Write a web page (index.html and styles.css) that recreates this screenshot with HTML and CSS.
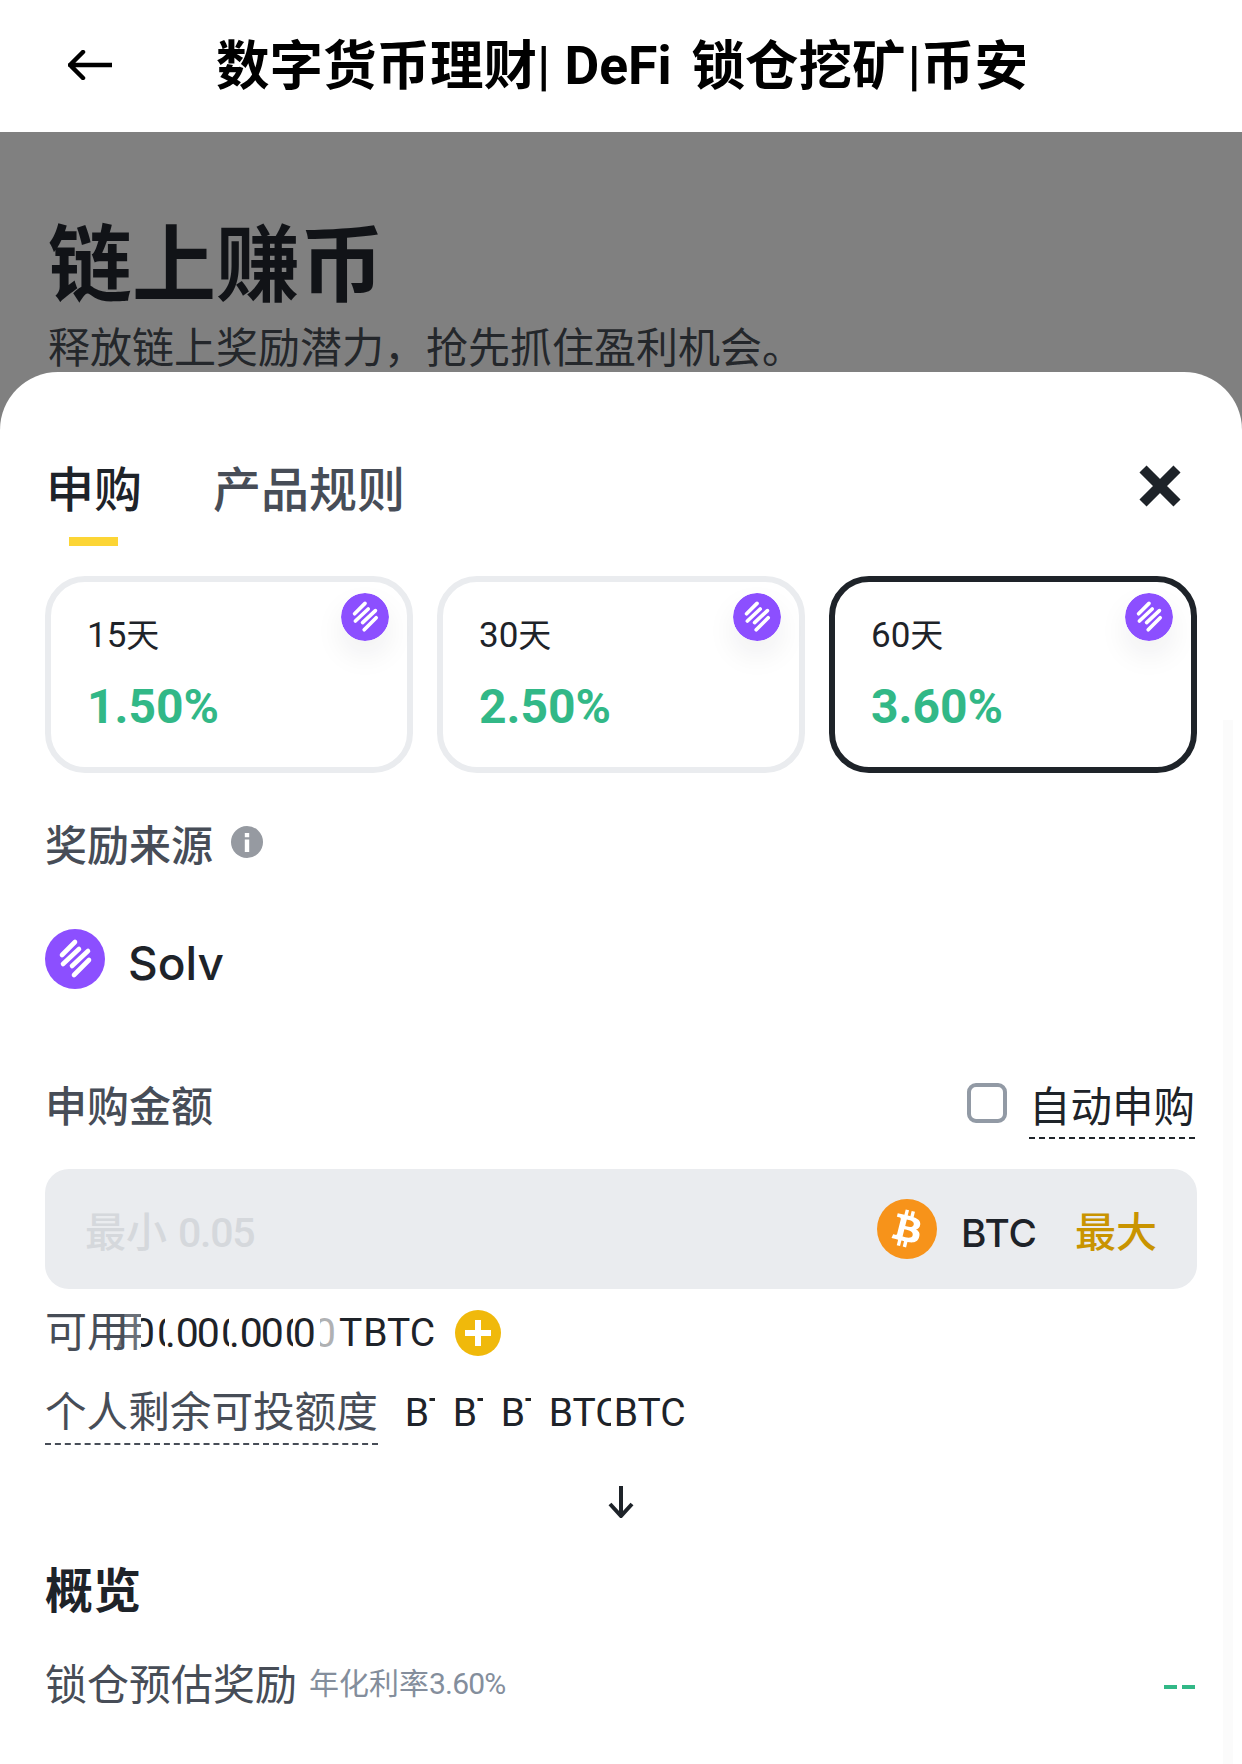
FILE: index.html
```html
<!DOCTYPE html>
<html lang="zh-CN">
<head>
<meta charset="utf-8">
<title>数字货币理财</title>
<link rel="stylesheet" href="styles.css">
</head>
<body>
<div class="page">
  <header class="topbar">
    <svg class="back" viewBox="0 0 44 30" width="44" height="30"><path d="M44 15H2M15 2 2 15l13 13" fill="none" stroke="#000" stroke-width="4.5" stroke-linecap="round" stroke-linejoin="round"/></svg>
    <div class="page-title">数字货币理财<span class="pipe">|</span><span class="latin">DeFi</span>锁仓挖矿<span class="pipe pipe-tight">|</span>币安</div>
  </header>
  <section class="hero">
    <h1 class="hero-title">链上赚币</h1>
    <p class="hero-sub">释放链上奖励潜力&#xFF0C;抢先抓住盈利机会。</p>
  </section>
  <main class="sheet">
    <div class="tabs">
      <div class="tab tab-active">申购<span class="tab-bar"></span></div>
      <div class="tab">产品规则</div>
      <svg class="close" viewBox="0 0 44 44" width="44" height="44"><path d="M5 5 39 39M39 5 5 39" fill="none" stroke="#1e2329" stroke-width="10"/></svg>
    </div>
    <div class="plans">
      <div class="plan">
        <svg class="solv badge" viewBox="0 0 60 60"><use href="#solv-mark"/></svg>
        <div class="plan-days"><span class="num">15</span>天</div>
        <div class="plan-rate">1.50%</div>
      </div>
      <div class="plan">
        <svg class="solv badge" viewBox="0 0 60 60"><use href="#solv-mark"/></svg>
        <div class="plan-days"><span class="num">30</span>天</div>
        <div class="plan-rate">2.50%</div>
      </div>
      <div class="plan plan-selected">
        <svg class="solv badge" viewBox="0 0 60 60"><use href="#solv-mark"/></svg>
        <div class="plan-days"><span class="num">60</span>天</div>
        <div class="plan-rate">3.60%</div>
      </div>
    </div>
    <div class="source-label">
      <span>奖励来源</span>
      <svg class="info" viewBox="0 0 32 32" width="32" height="32"><circle cx="16" cy="16" r="16" fill="#969aa1"/><path d="M13.8 7h4.4v4.2h-4.4zM13.8 13.5h4.4V26h-4.4z" fill="#fff"/></svg>
    </div>
    <div class="source">
      <svg class="solv solv-large" viewBox="0 0 60 60">
        <g id="solv-mark">
          <circle cx="30" cy="30" r="30" fill="#8c4fff"/>
          <path d="M17 26 30 13M18 35 34 20M27 37 43 22M29 46 44 31" fill="none" stroke="#fff" stroke-width="4.6" stroke-linecap="round"/>
        </g>
      </svg>
      <span class="source-name">Solv</span>
    </div>
    <div class="amount-head">
      <span class="amount-label">申购金额</span>
      <label class="auto">
        <span class="checkbox"></span>
        <span class="auto-text">自动申购</span>
      </label>
    </div>
    <div class="amount-input">
      <span class="placeholder">最小 <span class="num">0.05</span></span>
      <svg class="btc" viewBox="0 0 24 24" width="60" height="60"><circle cx="12" cy="12" r="12" fill="#f7931a"/><path fill="#fff" fill-rule="evenodd" d="M17.288 10.29c.24-1.59-.974-2.45-2.64-3.03l.54-2.153-1.315-.33-.525 2.107c-.345-.087-.705-.167-1.064-.25l.526-2.127-1.32-.33-.54 2.165c-.285-.067-.565-.132-.84-.2l-1.815-.45-.35 1.407s.975.225.955.236c.535.136.63.486.615.766l-1.477 5.92c-.075.166-.24.406-.614.314.015.02-.96-.24-.96-.24l-.66 1.51 1.71.426.93.242-.54 2.19 1.32.327.54-2.17c.36.1.705.19 1.05.273l-.51 2.154 1.32.33.545-2.19c2.24.427 3.93.257 4.64-1.774.57-1.637-.03-2.58-1.217-3.196.854-.193 1.5-.76 1.68-1.93h.01zm-3.01 4.22c-.404 1.64-3.157.75-4.05.53l.72-2.9c.896.23 3.757.67 3.33 2.37zm.41-4.24c-.37 1.49-2.662.735-3.405.55l.654-2.64c.744.18 3.137.524 2.75 2.084v.006z"/></svg>
      <span class="coin">BTC</span>
      <span class="max">最大</span>
    </div>
    <div class="avail">
      <span class="muted">可用</span><span class="muted ghost">用</span>
      <span class="z-tail">0</span><span class="z-head">0</span><span>.</span><span class="zeros">00</span><span class="z-head">0</span><span>.</span><span class="zeros">00</span><span class="z-head">0</span><span>0</span><span class="z-fade">0</span><span class="letter">T</span><span class="full">BTC</span>
      <svg class="plus" viewBox="0 0 46 46" width="46" height="46"><circle cx="23" cy="23" r="23" fill="#f0b90b"/><path d="M23 10v26M10 23h26" stroke="#fff" stroke-width="6"/></svg>
    </div>
    <div class="limit">
      <span class="limit-label">个人剩余可投额度</span>
      <span class="limit-values"><span class="cut">BTC</span><span class="cut">BTC</span><span class="cut">BTC</span><span class="cut cut-wide">BTC</span><span>BTC</span></span>
    </div>
    <div class="arrow-row">
      <svg viewBox="0 0 26 32" width="26" height="32"><path d="M13 0v29M2 18l11 12 11-12" fill="none" stroke="#1e2329" stroke-width="4"/></svg>
    </div>
    <h2 class="overview">概览</h2>
    <div class="estimate">
      <span class="estimate-label">锁仓预估奖励</span>
      <span class="estimate-note">年化利率<span class="num">3.60%</span></span>
      <span class="dashes"><i></i><i></i></span>
    </div>
  </main>
  <div class="scroll-ghost"></div>
</div>
</body>
</html>
```
FILE: styles.css
```css
* { box-sizing: border-box; }
html, body { margin: 0; padding: 0; }
body {
  width: 1242px;
  height: 1764px;
  overflow: hidden;
  background: #fff;
  font-family: "Inter", "Noto Sans CJK SC", sans-serif;
  color: #1e2329;
}
.page { position: relative; width: 1242px; height: 1764px; overflow: hidden; }
.num { font-family: "Roboto", "Noto Sans CJK SC", sans-serif; }

.topbar {
  height: 132px;
  display: flex;
  align-items: center;
  padding-left: 68px;
  background: #fff;
}
.back { flex: none; margin-right: 104px; margin-top: -2px; }
.page-title {
  display: flex;
  align-items: center;
  font-size: 53.5px;
  font-weight: 700;
  line-height: 60px;
  color: #000;
  white-space: nowrap;
}
.pipe {
  font-family: "Roboto", sans-serif;
  font-size: 54px;
  font-weight: 500;
  margin: 0 14px 0 0;
}
.pipe-tight { margin: 0 0 0 2px; }
.latin { font-family: "Roboto", sans-serif; font-weight: 700; margin-right: 20px; }

.hero {
  height: 298px;
  background: #808080;
  padding: 91px 0 0 48px;
}
.hero-title {
  margin: 0;
  font-size: 84px;
  line-height: 84px;
  font-weight: 700;
  color: #111317;
}
.hero-sub {
  margin: 20px 0 0;
  font-size: 42px;
  line-height: 42px;
  font-weight: 400;
  color: #24272b;
  white-space: nowrap;
}

.sheet {
  position: relative;
  height: 1392px;
  background: #fff;
  border-radius: 58px 58px 0 0;
  margin-top: -58px;
  padding: 88px 45px 0;
}
.tabs { display: flex; align-items: flex-start; height: 86px; }
.tab {
  display: flex;
  flex-direction: column;
  align-items: center;
  font-size: 48px;
  line-height: 60px;
  font-weight: 500;
  color: #474d57;
  margin-left: 1px;
  margin-right: 70px;
}
.tab-active { color: #1e2329; }
.tab-bar {
  width: 49px;
  height: 9px;
  margin-top: 17px;
  margin-right: 2px;
  background: #fcd535;
}
.close { margin: 4px 15px 0 auto; }

.plans {
  display: grid;
  grid-template-columns: repeat(3, 368px);
  gap: 24px;
  margin-top: 30px;
}
.plan {
  position: relative;
  height: 197px;
  border: 6px solid #eaecef;
  border-radius: 40px;
  padding: 32px 0 0 36px;
  background: #fff;
}
.plan-selected { border-color: #1e2329; }
.badge {
  position: absolute;
  top: 11px;
  right: 18px;
  width: 48px;
  height: 48px;
  border-radius: 50%;
  box-shadow: 0 14px 30px rgba(30, 35, 41, 0.07);
}
.plan-days {
  font-size: 33px;
  line-height: 42px;
  color: #1e2329;
}
.plan-days .num { font-size: 35px; }
.plan-rate {
  margin-top: 24px;
  font-family: "Roboto", sans-serif;
  font-size: 48px;
  line-height: 52px;
  font-weight: 700;
  color: #32b887;
}

.source-label {
  display: flex;
  align-items: center;
  gap: 18px;
  margin-top: 40px;
  font-size: 42px;
  line-height: 60px;
  height: 60px;
  color: #474d57;
}
.source-label > span { font-weight: 500; margin: 3px 0 -3px; }
.info { margin-top: -3px; }
.source {
  display: flex;
  align-items: center;
  gap: 23px;
  margin-top: 56px;
  height: 60px;
}
.solv { display: block; flex: none; }
.solv-large { width: 60px; height: 60px; }
.source-name { font-size: 46px; font-weight: 500; line-height: 60px; margin: 4px 0 -4px; color: #1e2329; }

.amount-head {
  display: flex;
  justify-content: space-between;
  align-items: flex-start;
  margin-top: 88px;
  height: 64px;
}
.amount-label { font-size: 42px; line-height: 60px; font-weight: 500; color: #474d57; }
.auto { display: flex; align-items: flex-start; gap: 22px; margin-right: 2px; }
.checkbox {
  width: 40px;
  height: 40px;
  margin-top: 6px;
  border: 4px solid #929aa5;
  border-radius: 9px;
}
.auto-text {
  font-size: 41.5px;
  line-height: 60px;
  height: 62px;
  border-bottom: 2px dashed #1e2329;
  color: #1e2329;
}

.amount-input {
  display: flex;
  align-items: center;
  height: 120px;
  padding: 0 40px;
  background: #eaecef;
  border-radius: 24px;
  margin-top: 28px;
}
.placeholder { flex: 1; font-size: 41px; line-height: 60px; font-weight: 500; color: #d5d8dc; margin-top: 6px; }
.placeholder .num { font-size: 41px; font-weight: 500; letter-spacing: -1.2px; }
.btc { flex: none; margin-right: 24px; }
.coin { font-size: 38.8px; font-weight: 500; margin-right: 38px; margin-top: 6px; color: #1e2329; }
.max { font-size: 41px; font-weight: 500; color: #c99400; }

.avail {
  display: flex;
  align-items: center;
  height: 60px;
  margin-top: 14px;
  font-family: "Roboto", "Noto Sans CJK SC", sans-serif;
  font-size: 41px;
  line-height: 60px;
  color: #1e2329;
  white-space: nowrap;
}
.muted { color: #474d57; font-size: 42px; }
.ghost { width: 27px; margin-left: -15px; overflow: hidden; opacity: .8; }
.z-tail { width: 14px; overflow: hidden; text-indent: -9px; }
.z-head { width: 8px; margin-left: 2px; overflow: hidden; }
.zeros { letter-spacing: -2px; margin-right: 1px; }
.z-fade { width: 16px; margin-left: 4px; overflow: hidden; text-indent: -7px; opacity: .35; }
.letter { margin-left: 3px; font-size: 39px; }
.full { margin-left: 1px; font-size: 39px; }
.plus { margin-left: 20px; flex: none; }

.limit {
  display: flex;
  height: 64px;
  margin-top: 18px;
  align-items: flex-start;
  white-space: nowrap;
}
.limit-label {
  font-size: 41.6px;
  line-height: 62px;
  height: 64px;
  border-bottom: 2px dashed #474d57;
  color: #474d57;
}
.limit-values {
  display: flex;
  margin: 2px 0 0 27px;
  font-family: "Roboto", sans-serif;
  font-size: 39px;
  line-height: 60px;
  color: #1e2329;
}
.cut { display: inline-block; overflow: hidden; width: 30px; margin-right: 18px; }
.cut-wide { width: 62px; margin-right: 3px; }

.arrow-row { display: flex; justify-content: center; margin-top: 41px; }
.arrow-row svg { display: block; }

.overview {
  margin: 43px 0 0;
  font-size: 48px;
  line-height: 60px;
  font-weight: 700;
  color: #1e2329;
}
.estimate {
  display: flex;
  align-items: center;
  margin-top: 30px;
  height: 60px;
}
.estimate-label { font-size: 42px; color: #474d57; }
.estimate-note { margin-left: 12px; font-size: 30px; color: #848e9c; }
.estimate-note .num { letter-spacing: -.8px; }
.dashes { margin-left: auto; display: flex; gap: 5px; margin-right: 2px; margin-top: 12px; }
.dashes i { display: block; width: 13px; height: 4px; background: #32b887; }

.scroll-ghost {
  position: absolute;
  left: 1223px;
  top: 720px;
  width: 10px;
  height: 1044px;
  background: #fbfbfb;
}
```
